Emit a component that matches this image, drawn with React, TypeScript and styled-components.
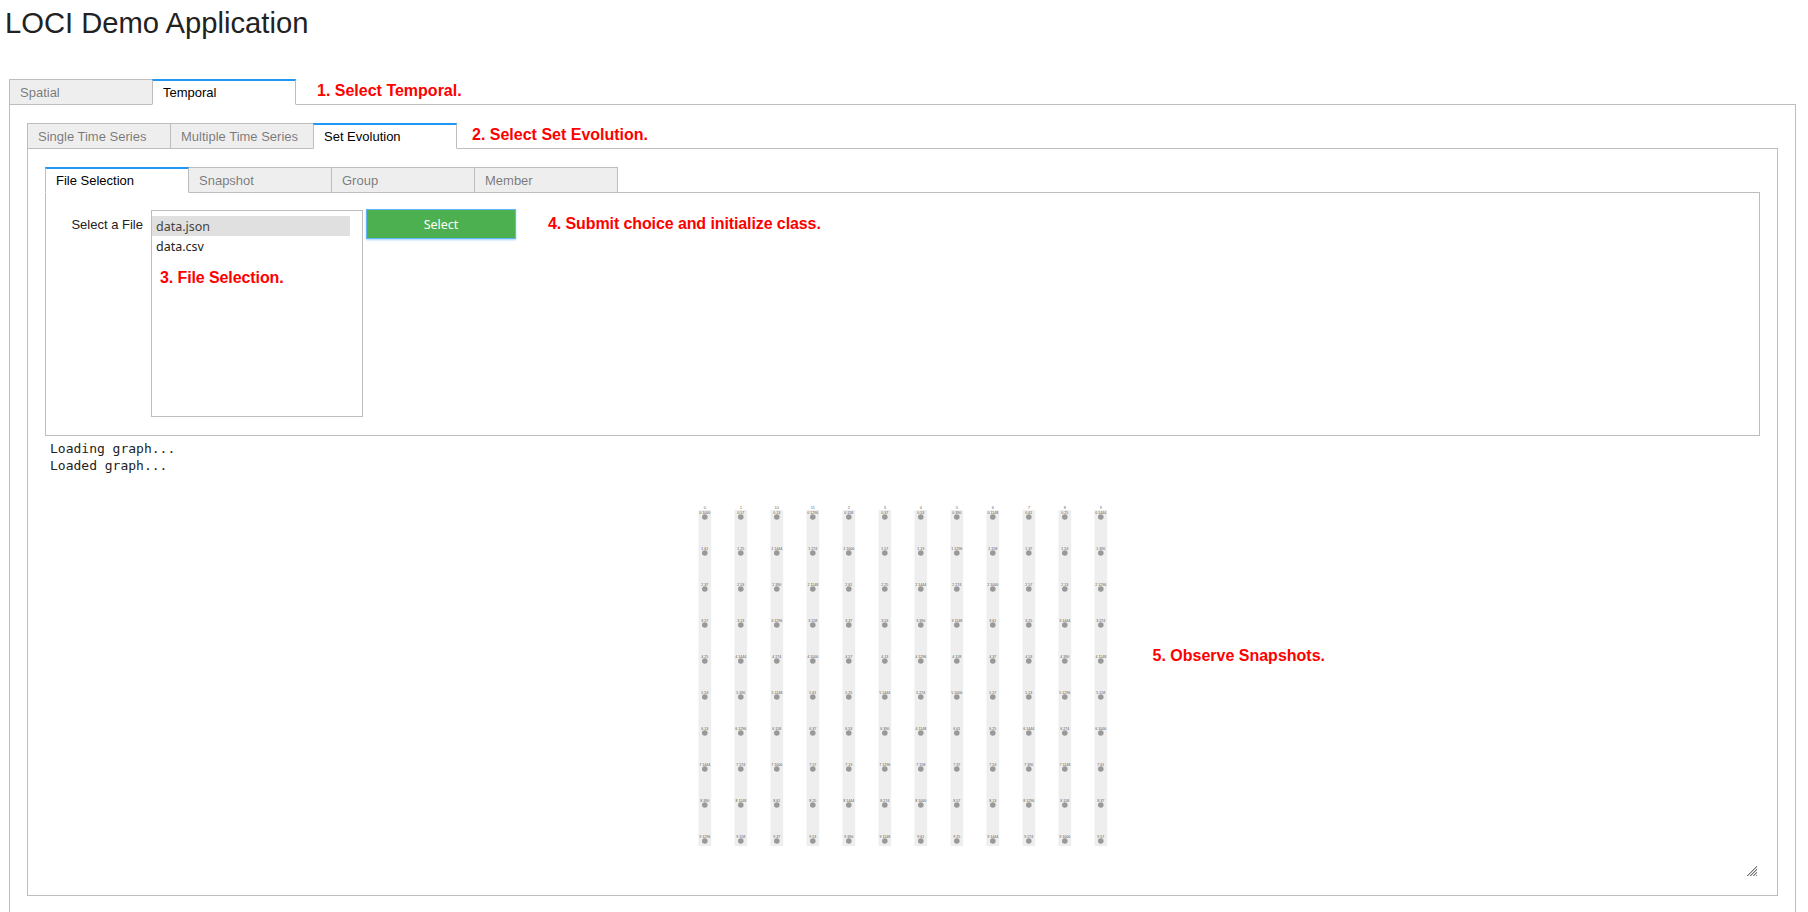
import React from "react";
import styled, { createGlobalStyle } from "styled-components";

const Global = createGlobalStyle`
  html, body { margin: 0; padding: 0; height: 912px; overflow: hidden; background: #fff; }
  body { font-family: "Liberation Sans", Arial, sans-serif; font-size: 13px; color: rgba(0,0,0,.8); }
`;

const Page = styled.div`
  padding: 0 12px 0 9px;
`;

const Title = styled.h1`
  margin: 0 0 0 -4px;
  height: 79px;
  padding-top: 4px;
  box-sizing: border-box;
  font-size: 29.2px;
  line-height: 38px;
  font-weight: 400;
  color: #222;
`;

const TabBar = styled.div`
  display: flex;
  height: 26px;
  position: relative;
  z-index: 1;
  margin-bottom: -1px;
`;

const Tab = styled.div<{ $active?: boolean }>`
  box-sizing: border-box;
  width: 144px;
  margin-right: -1px;
  height: 26px;
  padding: 0 10px;
  line-height: ${(p) => (p.$active ? 24 : 26)}px;
  border: 1px solid #bdbdbd;
  border-top: ${(p) => (p.$active ? "2px solid #2196f3" : "1px solid #bdbdbd")};
  border-bottom: ${(p) => (p.$active ? "1px solid #fff" : "1px solid #bdbdbd")};
  background: ${(p) => (p.$active ? "#fff" : "#eeeeee")};
  color: ${(p) => (p.$active ? "#000" : "rgba(0,0,0,.5)")};
  position: relative;
  z-index: ${(p) => (p.$active ? 1 : 0)};
`;

const Note = styled.div`
  color: #ff0000;
  font-family: "Liberation Sans", Arial, sans-serif;
  font-weight: 700;
  font-size: 16px;
  line-height: 20px;
  white-space: nowrap;
`;

const TabNote = styled(Note)<{ $gap: number }>`
  margin-left: ${(p) => p.$gap}px;
  margin-top: 2px;
  height: 20px;
`;

const Panel = styled.div`
  border: 1px solid #bdbdbd;
  padding: 18px 17px;
`;

const InnerPanel = styled.div`
  border: 1px solid #bdbdbd;
  padding: 18px 17px 19px;
`;

const FilePanel = styled.div`
  border: 1px solid #bdbdbd;
  height: 242px;
  padding: 0;
`;

const FileRow = styled.div`
  display: flex;
  align-items: flex-start;
  padding-top: 16px;
`;

const FieldLabel = styled.div`
  width: 97px;
  text-align: right;
  line-height: 32px;
  margin-right: 8px;
  color: #222;
  flex: none;
`;

const ListBox = styled.div`
  position: relative;
  box-sizing: border-box;
  width: 212px;
  height: 207px;
  border: 1px solid #bdbdbd;
  padding-top: 5px;
  margin-top: 1px;
  font-family: "Noto Sans", sans-serif;
  font-size: 12.5px;
  flex: none;
`;

const Option = styled.div<{ $selected?: boolean }>`
  box-sizing: border-box;
  width: 198px;
  height: 20px;
  line-height: 21px;
  padding-left: 4px;
  background: ${(p) => (p.$selected ? "#e0e0e0" : "transparent")};
  color: ${(p) => (p.$selected ? "#444" : "#222")};
`;

const ListNote = styled(Note)`
  position: absolute;
  left: 8px;
  top: 57px;
  letter-spacing: -0.1px;
`;

const SelectButton = styled.button`
  box-sizing: border-box;
  width: 150px;
  height: 30px;
  margin-left: 3px;
  padding: 0;
  border: 1px solid #64b5f6;
  background: #4caf50;
  color: #fff;
  font-family: "Noto Sans", sans-serif;
  font-size: 12.5px;
  box-shadow: 0 1px 2px rgba(33, 150, 243, .4);
  flex: none;
`;

const ButtonNote = styled(Note)`
  margin-left: 32px;
  margin-top: 5px;
  letter-spacing: -0.1px;
`;

const Log = styled.pre`
  margin: 4px 0 0 5px;
  font-family: "DejaVu Sans Mono", monospace;
  font-size: 13px;
  line-height: 17px;
  color: #222;
`;

const ChartBox = styled.div`
  position: relative;
  margin: 0 3px;
  height: 402px;
  overflow: hidden;
  display: grid;
  grid-template-columns: 1fr auto 1fr;
  align-items: start;
`;

const ChartNote = styled(Note)`
  grid-column: 3;
  margin: 172px 0 0 34px;
`;

const ChartSvg = styled.svg`
  grid-column: 2;
  display: block;
  margin-top: 28px;
`;

const GripIcon = styled.svg`
  position: absolute;
  right: 0;
  bottom: 0;
`;

const columns = ["0", "1", "10", "11", "2", "3", "4", "5", "6", "7", "8", "9"];
const labelFor = (c: number, r: number) => {
  const s = (c * 7 + r * 11) % 13;
  const base = `${r}`;
  return s % 4 === 0
    ? `${base} ${1000 + s * 37}`
    : s % 4 === 1
    ? `${base} ${10 + s * 3}`
    : s % 4 === 2
    ? `${base} ${100 + s * 29}`
    : `${base} ${50 + s}`;
};

const Chart = () => {
  const colX = (c: number) => 17.8 + c * 36;
  const rowY = (r: number) => 15 + r * 36;
  return (
    <ChartSvg width="432" height="350" viewBox="0 0 432 350">
      {columns.map((name, c) => (
        <g key={name}>
          <rect x={11.5 + c * 36} y={8} width={12.7} height={336} fill="#eeeeee" />
          <text x={colX(c)} y={7} fontSize="4" textAnchor="middle" fill="#666" fontFamily="Liberation Sans, sans-serif">
            {name}
          </text>
          {Array.from({ length: 10 }, (_, r) => (
            <g key={r}>
              <text x={colX(c)} y={rowY(r) - 3.5} fontSize="3.6" textAnchor="middle" fill="#555" fontFamily="Liberation Sans, sans-serif">
                {labelFor(c, r)}
              </text>
              <circle cx={colX(c)} cy={rowY(r)} r={2.8} fill="#999" />
            </g>
          ))}
        </g>
      ))}
    </ChartSvg>
  );
};

const Grip = () => {
  const dots: React.ReactElement[] = [];
  for (let y = 0; y < 10; y++) {
    for (let x = 0; x < 10; x++) {
      if (x + y >= 9 && (x + y) % 3 === 0) {
        dots.push(<rect key={`${x}-${y}`} x={x} y={y} width={1} height={1} fill="#777" />);
      } else if (x + y >= 9 && (x + y) % 3 === 1) {
        dots.push(<rect key={`${x}-${y}`} x={x} y={y} width={1} height={1} fill="#bbb" />);
      }
    }
  }
  return (
    <GripIcon width="10" height="10" viewBox="0 0 10 10" shapeRendering="crispEdges">
      {dots}
    </GripIcon>
  );
};

export default function App() {
  return (
    <Page>
      <Global />
      <Title>LOCI Demo Application</Title>
      <TabBar>
        <Tab>Spatial</Tab>
        <Tab $active>Temporal</Tab>
        <TabNote $gap={22}>1. Select Temporal.</TabNote>
      </TabBar>
      <Panel>
        <TabBar>
          <Tab>Single Time Series</Tab>
          <Tab>Multiple Time Series</Tab>
          <Tab $active>Set Evolution</Tab>
          <TabNote $gap={16}>2. Select Set Evolution.</TabNote>
        </TabBar>
        <InnerPanel>
          <TabBar>
            <Tab $active>File Selection</Tab>
            <Tab>Snapshot</Tab>
            <Tab>Group</Tab>
            <Tab>Member</Tab>
          </TabBar>
          <FilePanel>
            <FileRow>
              <FieldLabel>Select a File</FieldLabel>
              <ListBox>
                <Option $selected>data.json</Option>
                <Option>data.csv</Option>
                <ListNote>3. File Selection.</ListNote>
              </ListBox>
              <SelectButton>Select</SelectButton>
              <ButtonNote>4. Submit choice and initialize class.</ButtonNote>
            </FileRow>
          </FilePanel>
          <Log>{"Loading graph...\nLoaded graph..."}</Log>
          <ChartBox>
            <Chart />
            <ChartNote>5. Observe Snapshots.</ChartNote>
            <Grip />
          </ChartBox>
        </InnerPanel>
      </Panel>
    </Page>
  );
}
